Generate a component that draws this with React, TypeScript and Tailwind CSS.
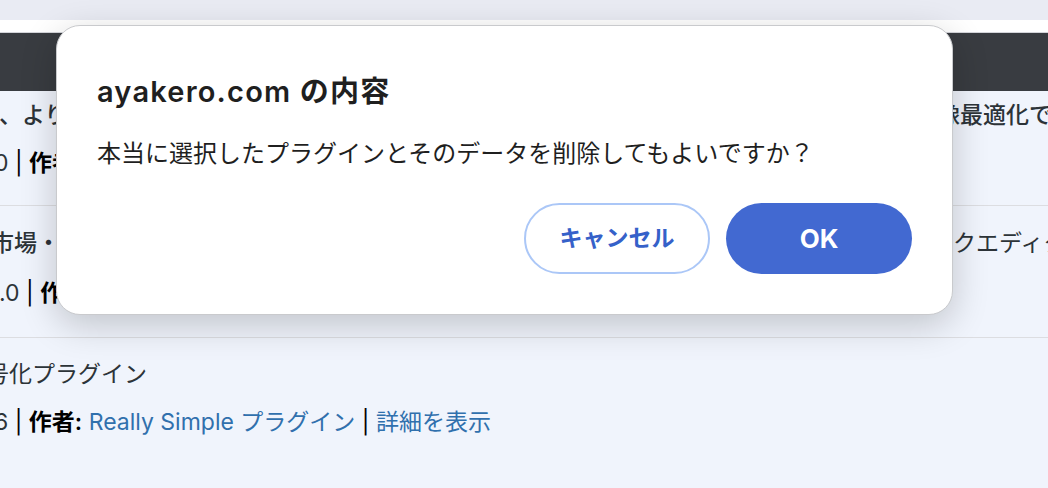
const font = "font-['Inter','Noto_Sans_CJK_JP',sans-serif]";

function Meta({ version, author }: { version: string; author: string }) {
  return (
    <>
      {version} <span className="text-black">|</span>{" "}
      <span className="font-semibold text-black">作者:</span>{" "}
      <a className="text-[#3070ad]">{author}</a>{" "}
      <span className="text-black">|</span>{" "}
      <a className="text-[#3070ad]">詳細を表示</a>
    </>
  );
}

function PluginRows() {
  return (
    <div className={`flex flex-col bg-[#f0f4fc] text-[23px] leading-[30px] text-[#2c3338] ${font}`}>
      <div className="flex h-[115px] border-b border-[#dcdde1] pt-[9px]">
        <div className="w-[934px] shrink-0 overflow-hidden whitespace-nowrap">
          <p className="-ml-[1px] font-medium">、より軽量で高速なサイトを実現します</p>
          <p className="mt-[18px] -ml-[6px]">
            <Meta version="0" author="EWWW Image Optimizer" />
          </p>
        </div>
        <div className="flex-1 overflow-hidden whitespace-nowrap">
          <p className="ml-[3px] font-medium">像最適化で表示速度を改善</p>
        </div>
      </div>
      <div className="flex h-[132px] border-b border-[#dcdde1] pt-[22px]">
        <div className="w-[934px] shrink-0 overflow-hidden whitespace-nowrap">
          <p className="-ml-[9px] font-medium">市場・ブロックで作るサイト</p>
          <p className="mt-[20px] -ml-[1px]">
            <Meta version=".0" author="WordPress.org" />
          </p>
        </div>
        <div className="flex-1 overflow-hidden whitespace-nowrap">
          <p className="-ml-[4px]">ックエディター</p>
        </div>
      </div>
      <div className="flex flex-1 pt-[21px]">
        <div className="w-[934px] shrink-0 overflow-hidden whitespace-nowrap">
          <p className="-ml-[14px]">号化プラグイン</p>
          <p className="mt-[18px] -ml-[6px]">
            <Meta version="6" author="Really Simple プラグイン" />
          </p>
        </div>
      </div>
    </div>
  );
}

function ConfirmDialog() {
  return (
    <div
      className={`absolute left-[56px] top-[25px] flex w-[897px] flex-col rounded-[24px] border border-[#c9cacd] bg-white p-[40px] shadow-[0_10px_36px_rgba(0,0,0,0.2)] ${font}`}
    >
      <h2 className="text-[29px] font-semibold leading-[52px] tracking-[1.2px] text-[#1f1f1f]">ayakero.com の内容</h2>
      <p className="mt-[18px] text-[24px] leading-[36px] text-[#1f1f1f]">
        本当に選択したプラグインとそのデータを削除してもよいですか？
      </p>
      <div className="mt-[31px] flex justify-end gap-[16px]">
        <button className="h-[71px] w-[186px] rounded-full border-2 border-[#abc7f7] bg-white text-[23px] font-bold text-[#3561c9]">
          キャンセル
        </button>
        <button className="h-[71px] w-[186px] rounded-full bg-[#4269d1] text-[26px] font-bold text-white">
          OK
        </button>
      </div>
    </div>
  );
}

export default function App() {
  return (
    <div className="relative flex h-[488px] w-[1048px] flex-col overflow-hidden bg-[#f0f4fc]">
      <div className="h-[20px] bg-[#e9ebf3]" />
      <div className="h-[13px] border-b border-[#d4d5da] bg-white" />
      <div className="h-[58px] bg-[#393c41]" />
      <PluginRows />
      <ConfirmDialog />
    </div>
  );
}
